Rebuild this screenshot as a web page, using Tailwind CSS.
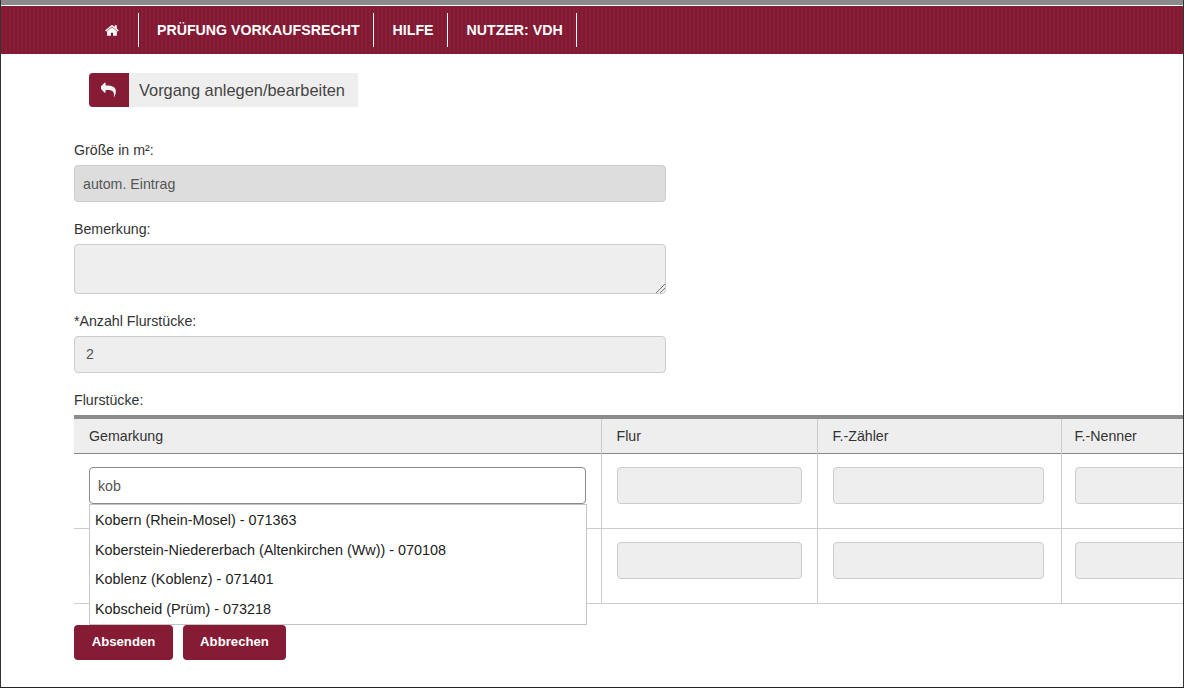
<!DOCTYPE html>
<html lang="de">
<head>
    <meta charset="UTF-8">
    <title>Vorgang anlegen/bearbeiten</title>
    <script src="https://cdn.jsdelivr.net/npm/@tailwindcss/browser@4"></script>
</head>
<body class="bg-white font-['Liberation_Sans',Arial,sans-serif] text-[14.2px] text-[#333]">
    <div class="h-[688px] w-[1184px] overflow-hidden border-x border-b border-x-[#333] border-b-[#222] box-border">
        <div class="h-[5px] bg-[#8a8a8a]"></div>
        <nav class="mt-px h-[48px] pl-[86px] flex items-center text-white font-bold bg-[#851b34] bg-[repeating-linear-gradient(90deg,#8a1c37_0,#8a1c37_2px,#7e1a31_2px,#7e1a31_4px)]">
            <div class="h-[34px] pl-[18px] pr-[18px] flex items-center border-r border-white">
                <svg class="w-[15px] h-[15px] fill-white" viewBox="0 0 1792 1792"><path d="M1408 992v480q0 26-19 45t-45 19h-384v-384h-256v384h-384q-26 0-45-19t-19-45v-480q0-1 .5-3t.5-3l575-474 575 474q1 2 1 6zm223-69l-62 74q-8 9-21 11h-3q-13 0-21-7l-692-577-692 577q-12 8-24 7-13-2-21-11l-62-74q-8-10-7-23.5t11-21.5l719-599q32-26 76-26t76 26l244 204v-195q0-14 9-23t23-9h192q14 0 23 9t9 23v408l219 182q10 8 11 21.5t-7 23.5z"/></svg>
            </div>
            <div class="h-[34px] pl-[18px] pr-[13px] pt-[2px] flex items-center border-r border-white">PRÜFUNG VORKAUFSRECHT</div>
            <div class="h-[34px] pl-[19px] pr-[13px] pt-[2px] flex items-center border-r border-white">HILFE</div>
            <div class="h-[34px] pl-[19px] pr-[13px] pt-[2px] flex items-center border-r border-white">NUTZER: VDH</div>
        </nav>

        <div class="pl-[73px] pt-[19px]">
            <div class="ml-[15px] flex h-[34px] w-[269px] items-center bg-[#eeeeee]">
                <div class="flex h-full w-[40px] items-center justify-center rounded-l-[4px] bg-[#851b34]">
                    <svg class="w-[16px] h-[16px] fill-[#f5f5f5]" viewBox="0 0 1792 1792"><path d="M1664 1120q0 166-127 451-3 7-10.5 24t-13.5 30-13 22q-12 17-28 17-15 0-23.5-10t-8.5-25q0-9 2.5-26.5t2.5-23.5q5-68 5-123 0-101-17.5-181t-48.5-138.5-80-101-105.5-69.5-133-42.5-154-21.5-175.5-6h-224v256q0 26-19 45t-45 19-45-19l-512-512q-19-19-19-45t19-45l512-512q19-19 45-19t45 19 19 45v256h224q713 0 875 403 53 134 53 333z"/></svg>
                </div>
                <span class="pl-[10px] text-[16.4px] text-[#444]">Vorgang anlegen/bearbeiten</span>
            </div>

            <label class="mt-[33px] block h-[20px] leading-[20px]">Größe in m²:</label>
            <div class="mt-[5px] flex h-[37px] w-[592px] items-center rounded-[4px] border border-[#ccc] bg-[#dddddd] px-[8px] pt-[2px] text-[#555]">autom. Eintrag</div>

            <label class="mt-[17px] block h-[20px] leading-[20px]">Bemerkung:</label>
            <div class="relative mt-[5px] h-[50px] w-[592px] rounded-[4px] border border-[#ccc] bg-[#eeeeee]">
                <svg class="absolute right-0 bottom-0 w-[10px] h-[10px] stroke-[#777]" viewBox="0 0 10 10"><path d="M1 10L10 1M5 10L10 5" stroke-width="1" fill="none"/></svg>
            </div>

            <label class="mt-[17px] block h-[20px] leading-[20px]">*Anzahl Flurstücke:</label>
            <div class="mt-[5px] flex h-[37px] w-[592px] items-center rounded-[4px] border border-[#ccc] bg-[#eeeeee] px-[11px] text-[#555]">2</div>

            <label class="mt-[17px] block h-[20px] leading-[20px]">Flurstücke:</label>

            <div class="relative mt-[5px]">
                <div class="w-[1110px] overflow-hidden">
                    <table class="w-[1239px] table-fixed border-collapse">
                        <colgroup>
                            <col class="w-[527px]">
                            <col class="w-[216px]">
                            <col class="w-[244px]">
                            <col class="w-[252px]">
                        </colgroup>
                        <thead class="border-t-4 border-[#8c8c8c]">
                            <tr class="h-[36px] bg-[#eeeeee] border-b border-b-[#888] text-left text-[#333]">
                                <th class="pl-[15px] pt-[2px] font-normal">Gemarkung</th>
                                <th class="border-l border-[#ccc] pl-[15px] pt-[2px] font-normal">Flur</th>
                                <th class="border-l border-[#ccc] pl-[15px] pt-[2px] font-normal">F.-Zähler</th>
                                <th class="border-l border-[#ccc] pl-[13px] pt-[2px] font-normal">F.-Nenner</th>
                            </tr>
                        </thead>
                        <tbody>
                            <tr class="h-[75px] border-b border-[#ccc] align-top">
                                <td class="pl-[15px] pt-[13px]">
                                    <div class="flex h-[37px] w-[497px] items-center rounded-[4px] border border-[#888] bg-white px-[8px] pt-[4px] text-[#555]">kob</div>
                                </td>
                                <td class="border-l border-[#ccc] pl-[15px] pt-[13px]"><div class="h-[37px] w-[185px] rounded-[4px] border border-[#ccc] bg-[#eeeeee]"></div></td>
                                <td class="border-l border-[#ccc] pl-[15px] pt-[13px]"><div class="h-[37px] w-[211px] rounded-[4px] border border-[#ccc] bg-[#eeeeee]"></div></td>
                                <td class="border-l border-[#ccc] pl-[13px] pt-[13px]"><div class="h-[37px] w-[211px] rounded-[4px] border border-[#ccc] bg-[#eeeeee]"></div></td>
                            </tr>
                            <tr class="h-[75px] border-b border-[#ccc] align-top">
                                <td class="pl-[15px] pt-[13px]"></td>
                                <td class="border-l border-[#ccc] pl-[15px] pt-[13px]"><div class="h-[37px] w-[185px] rounded-[4px] border border-[#ccc] bg-[#eeeeee]"></div></td>
                                <td class="border-l border-[#ccc] pl-[15px] pt-[13px]"><div class="h-[37px] w-[211px] rounded-[4px] border border-[#ccc] bg-[#eeeeee]"></div></td>
                                <td class="border-l border-[#ccc] pl-[13px] pt-[13px]"><div class="h-[37px] w-[211px] rounded-[4px] border border-[#ccc] bg-[#eeeeee]"></div></td>
                            </tr>
                        </tbody>
                    </table>
                </div>

                <ul class="absolute left-[15px] top-[89px] w-[498px] h-[121px] border border-[#c5c5c5] bg-white pl-[5px] text-[14.4px] text-[#222]">
                    <li class="h-[30px] leading-[31px]">Kobern (Rhein-Mosel) - 071363</li>
                    <li class="h-[29px] leading-[30px]">Koberstein-Niedererbach (Altenkirchen (Ww)) - 070108</li>
                    <li class="h-[30px] leading-[31px]">Koblenz (Koblenz) - 071401</li>
                    <li class="h-[30px] leading-[31px]">Kobscheid (Prüm) - 073218</li>
                </ul>
            </div>

            <div class="mt-[21px] flex gap-[10px] text-[13.2px] font-bold text-white">
                <button class="h-[35px] w-[99px] rounded-[4px] bg-[#851b34]">Absenden</button>
                <button class="h-[35px] w-[103px] rounded-[4px] bg-[#851b34]">Abbrechen</button>
            </div>
        </div>
    </div>
</body>
</html>
